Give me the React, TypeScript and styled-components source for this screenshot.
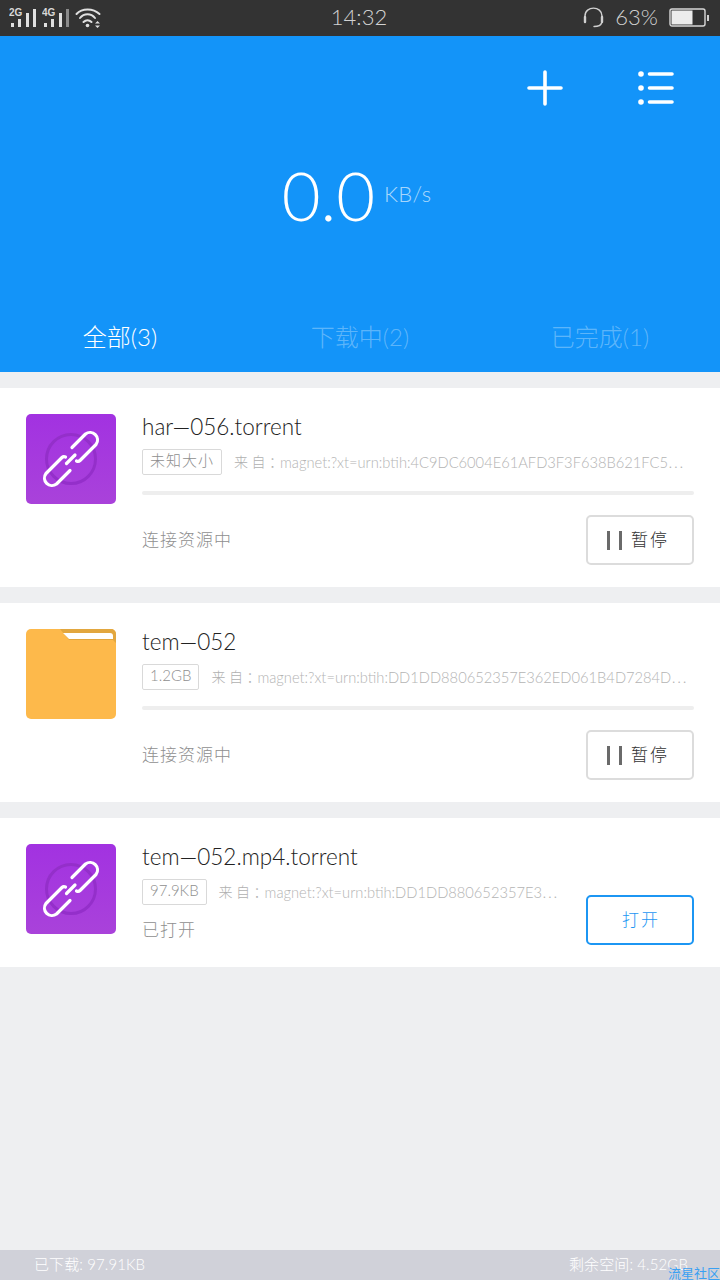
import styled, { createGlobalStyle } from "styled-components"

const GlobalStyle = createGlobalStyle`
    * { box-sizing: border-box; }
    html, body { margin: 0; padding: 0; }
    body {
        background: #eeeff1;
        font-family: Lato, "Noto Sans CJK SC", sans-serif;
    }
`

const Page = styled.div`
    position: relative;
    width: 720px;
    height: 1280px;
    display: flex;
    flex-direction: column;
    overflow: hidden;
    background: #eeeff1;
`

const StatusBar = styled.div`
    height: 36px;
    background: #333333;
    color: #d2d2d2;
    display: grid;
    grid-template-columns: 1fr auto 1fr;
    align-items: center;
    padding: 0 11px 4px 9px;
`

const StatusLeft = styled.div`
    display: flex;
    align-items: center;
`

const StatusRight = styled.div`
    display: flex;
    align-items: center;
    justify-content: flex-end;
    gap: 11px;
`

const StatusClock = styled.span`
    font-size: 22px;
    font-weight: 300;
`

const StatusPercent = styled.span`
    font-size: 22px;
    font-weight: 300;
`

const SmallTag = styled.text`
    font-family: "Liberation Sans", sans-serif;
    font-size: 10px;
    font-weight: 700;
    fill: #d8d8d8;
`

const Header = styled.header`
    height: 336px;
    background: #1394f9;
    display: flex;
    flex-direction: column;
    color: #fff;
`

const HeaderActions = styled.div`
    display: flex;
    justify-content: flex-end;
    gap: 75px;
    padding: 34px 46px 0 0;
`

const Speed = styled.div`
    display: flex;
    justify-content: center;
    align-items: flex-start;
    gap: 9px;
    margin-top: 45px;
    padding-right: 7px;
`

const SpeedValue = styled.span`
    font-size: 67px;
    font-weight: 300;
    line-height: 88px;
`

const SpeedUnit = styled.span`
    font-size: 22px;
    font-weight: 300;
    line-height: 26px;
    margin-top: 30px;
    letter-spacing: 0.3px;
    color: rgba(255, 255, 255, 0.65);
`

const Tabs = styled.nav`
    margin-top: auto;
    height: 70px;
    padding-bottom: 4px;
    display: grid;
    grid-template-columns: repeat(3, 1fr);
    align-items: center;
`

const Tab = styled.span<{ $active?: boolean }>`
    text-align: center;
    font-size: 24px;
    font-weight: 300;
    color: ${(p) => (p.$active ? "#ffffff" : "rgba(255, 255, 255, 0.32)")};
`

const List = styled.main`
    flex: 1;
    display: flex;
    flex-direction: column;
    gap: 16px;
    padding-top: 16px;
`

const Card = styled.article`
    display: flex;
    gap: 26px;
    padding: 26px 26px 22px;
    background: #fff;
`

const Thumb = styled.div`
    flex: none;
    width: 90px;
    height: 90px;
`

const Body = styled.div<{ $row?: boolean }>`
    flex: 1;
    min-width: 0;
    display: flex;
    flex-direction: ${(p) => (p.$row ? "row" : "column")};
    gap: ${(p) => (p.$row ? "26px" : "0")};
`

const Info = styled.div`
    flex: 1;
    min-width: 0;
`

const Title = styled.div`
    height: 26px;
    line-height: 25px;
    font-size: 22.5px;
    font-weight: 300;
    color: #222222;
`

const MetaRow = styled.div`
    display: flex;
    align-items: center;
    gap: 12px;
    height: 26px;
    margin-top: 9px;
    overflow: hidden;
    white-space: nowrap;
`

const SizeTag = styled.span<{ $spaced?: boolean }>`
    flex: none;
    height: 26px;
    line-height: 21px;
    padding: 0 7px;
    border: 1px solid #d9d9d9;
    border-radius: 2px;
    font-size: 15px;
    font-weight: 300;
    letter-spacing: ${(p) => (p.$spaced ? "1px" : "0")};
    color: #8f8f8f;
`

const Source = styled.span`
    flex: none;
    margin: 0 -11.5px 3px 0;
    font-size: 14px;
    font-weight: 300;
    font-feature-settings: "halt";
    letter-spacing: 3.5px;
    color: #b0b0b0;
`

const Url = styled.span`
    margin-bottom: 2px;
    font-size: 14.7px;
    font-weight: 300;
    color: #b4b4b4;
`

const Progress = styled.div`
    height: 4px;
    margin-top: 16px;
    border-radius: 2px;
    background: #eeeeee;
`

const ActionRow = styled.div`
    display: flex;
    align-items: center;
    justify-content: space-between;
    margin-top: 20px;
`

const Status = styled.span`
    margin-bottom: 4px;
    font-size: 17px;
    font-weight: 300;
    letter-spacing: 1px;
    color: #8f8f8f;
`

const OpenedStatus = styled(Status)`
    display: block;
    margin-top: 13px;
    margin-bottom: 0;
    padding-bottom: 3px;
    line-height: 24px;
`

const Button = styled.button<{ $primary?: boolean }>`
    flex: none;
    align-self: flex-end;
    width: 108px;
    height: 50px;
    display: flex;
    align-items: center;
    justify-content: center;
    gap: 9px;
    padding: 0;
    background: #fff;
    border: 2px solid ${(p) => (p.$primary ? "#1c96f3" : "#dcdcdc")};
    border-radius: 5px;
    font-family: inherit;
    font-size: 17px;
    font-weight: 300;
    letter-spacing: 2px;
    color: ${(p) => (p.$primary ? "#1c96f3" : "#333333")};
`

const ButtonLabel = styled.span`
    margin: 0 -2px 3px 0;
`

const PauseMark = styled.span`
    width: 15px;
    height: 19px;
    margin-left: -6px;
    border-left: 3px solid #6a6a6a;
    border-right: 3px solid #6a6a6a;
`

const Footer = styled.footer`
    height: 30px;
    background: #d0d1d9;
    display: flex;
    align-items: center;
    justify-content: space-between;
    padding: 0 32px 3px 34px;
    font-size: 15px;
    font-weight: 300;
    letter-spacing: 0.1px;
    color: #fff;
`

const Watermark = styled.span`
    position: absolute;
    right: 0;
    bottom: 0;
    font-size: 13px;
    line-height: 14px;
    color: #3aa0f2;
`

const SignalIcon = (props: { label: string; dim?: boolean }) => (
    <svg width="33" height="24" viewBox="0 0 33 24">
        <SmallTag x="0" y="12">{props.label}</SmallTag>
        <rect x="2" y="19" width="3" height="4" fill="#e0e0e0" />
        <rect x="9" y="15" width="3" height="8" fill="#e0e0e0" />
        <rect x="17" y="9" width="3" height="14" fill="#e0e0e0" />
        <rect x="24" y="5" width="3" height="18" fill={props.dim ? "#8a8a8a" : "#e0e0e0"} />
    </svg>
)

const WifiIcon = () => (
    <svg width="26" height="26" viewBox="0 0 26 26" fill="none" stroke="#e0e0e0" strokeWidth="2" strokeLinecap="round">
        <path d="M1.500 11 C7 5 18 5 24.500 11" />
        <path d="M5 15 C9 10 16 10 20 15" />
        <path d="M8.500 19 C11 16.500 14 16.500 16.500 19" />
        <circle cx="12.500" cy="22.500" r="1.800" fill="#e0e0e0" stroke="none" />
        <path d="M20 20.500 L22.500 18 L25 20.500 Z M20 22.500 L22.500 25 L25 22.500 Z" fill="#e0e0e0" stroke="none" />
    </svg>
)

const HeadsetIcon = () => (
    <svg width="22" height="24" viewBox="0 0 22 24" fill="none" stroke="#d0d0d0" strokeLinecap="round">
        <path d="M3 15 V12 C3 1.500 20 1.500 20 12 V15" strokeWidth="1.400" />
        <path d="M3 13 V18" strokeWidth="2.400" />
        <path d="M20 13 V18" strokeWidth="2.400" />
        <path d="M19.500 19 C19 21.500 17 22.500 12 22.500" strokeWidth="1.400" />
    </svg>
)

const BatteryIcon = () => (
    <svg width="40" height="24" viewBox="0 0 40 24">
        <rect x="1" y="5" width="35" height="17" rx="2" fill="none" stroke="#d8d8d8" strokeWidth="1.400" />
        <rect x="2.500" y="6.500" width="21" height="14" fill="#ececec" />
        <rect x="38" y="11" width="2" height="6" fill="#d0d0d0" />
    </svg>
)

const PlusIcon = () => (
    <svg width="36" height="36" viewBox="0 0 36 36" stroke="#fff" strokeWidth="3.600" strokeLinecap="round">
        <path d="M18 2 V34 M2 18 H34" />
    </svg>
)

const MenuIcon = () => (
    <svg width="36" height="36" viewBox="0 0 36 36" stroke="#fff" strokeWidth="3.600" strokeLinecap="round" fill="#fff">
        <path d="M11.500 4 H34 M11.500 18 H34 M11.500 32 H34" />
        <circle cx="3" cy="4" r="2.800" stroke="none" />
        <circle cx="3" cy="18" r="2.800" stroke="none" />
        <circle cx="3" cy="32" r="2.800" stroke="none" />
    </svg>
)

const LinkThumb = (props: { id: string }) => (
    <Thumb>
        <svg width="90" height="90" viewBox="0 0 90 90">
            <defs>
                <linearGradient id={props.id} x1="0" y1="0" x2="0" y2="1">
                    <stop offset="0" stopColor="#a232e1" />
                    <stop offset="1" stopColor="#a942da" />
                </linearGradient>
            </defs>
            <rect width="90" height="90" rx="5" fill={`url(#${props.id})`} />
            <circle cx="45" cy="45" r="24.500" fill="none" stroke="#942fca" strokeWidth="3" />
            <g fill="none" stroke="#fff" strokeWidth="3.200" strokeLinecap="round" strokeLinejoin="round">
                <path d="M46 33.500 L59.500 20 A7.500 7.500 0 0 1 70 30.500 L54 46.500 Q52.500 48 50.500 47" />
                <path d="M44 56.500 L30.500 70 A7.500 7.500 0 0 1 20 59.500 L36 43.500 Q37.500 42 39.500 43" />
                <path d="M40.500 49.500 L49 41" />
            </g>
        </svg>
    </Thumb>
)

const FolderThumb = () => (
    <Thumb>
        <svg width="90" height="90" viewBox="0 0 90 90">
            <path d="M5 0 H85 A5 5 0 0 1 90 5 V85 A5 5 0 0 1 85 90 H5 A5 5 0 0 1 0 85 V5 A5 5 0 0 1 5 0 Z" fill="#fdb94b" />
            <path d="M34 0 H85 A5 5 0 0 1 90 5 V14 L87 11 H43 Z" fill="#e2a73f" />
            <path d="M37 4 H84 A3 3 0 0 1 87 7 V10 H43 Z" fill="#fff" />
        </svg>
    </Thumb>
)

const Meta = (props: { size: string; url: string; spaced?: boolean }) => (
    <MetaRow>
        <SizeTag $spaced={props.spaced}>{props.size}</SizeTag>
        <Source>来自：</Source>
        <Url>{props.url}</Url>
    </MetaRow>
)

const PauseButton = () => (
    <Button><PauseMark /><ButtonLabel>暂停</ButtonLabel></Button>
)

const App = () => {
    return (
        <Page>
            <GlobalStyle />
            <StatusBar>
                <StatusLeft>
                    <SignalIcon label="2G" />
                    <SignalIcon label="4G" dim />
                    <WifiIcon />
                </StatusLeft>
                <StatusClock>14:32</StatusClock>
                <StatusRight>
                    <HeadsetIcon />
                    <StatusPercent>63%</StatusPercent>
                    <BatteryIcon />
                </StatusRight>
            </StatusBar>
            <Header>
                <HeaderActions>
                    <PlusIcon />
                    <MenuIcon />
                </HeaderActions>
                <Speed>
                    <SpeedValue>0.0</SpeedValue>
                    <SpeedUnit>KB/s</SpeedUnit>
                </Speed>
                <Tabs>
                    <Tab $active>全部(3)</Tab>
                    <Tab>下载中(2)</Tab>
                    <Tab>已完成(1)</Tab>
                </Tabs>
            </Header>
            <List>
                <Card>
                    <LinkThumb id="link-a" />
                    <Body>
                        <Title>har—056.torrent</Title>
                        <Meta spaced size="未知大小" url="magnet:?xt=urn:btih:4C9DC6004E61AFD3F3F638B621FC5⋯" />
                        <Progress />
                        <ActionRow>
                            <Status>连接资源中</Status>
                            <PauseButton />
                        </ActionRow>
                    </Body>
                </Card>
                <Card>
                    <FolderThumb />
                    <Body>
                        <Title>tem—052</Title>
                        <Meta size="1.2GB" url="magnet:?xt=urn:btih:DD1DD880652357E362ED061B4D7284D⋯" />
                        <Progress />
                        <ActionRow>
                            <Status>连接资源中</Status>
                            <PauseButton />
                        </ActionRow>
                    </Body>
                </Card>
                <Card>
                    <LinkThumb id="link-b" />
                    <Body $row>
                        <Info>
                            <Title>tem—052.mp4.torrent</Title>
                            <Meta size="97.9KB" url="magnet:?xt=urn:btih:DD1DD880652357E3⋯" />
                            <OpenedStatus>已打开</OpenedStatus>
                        </Info>
                        <Button $primary><ButtonLabel>打开</ButtonLabel></Button>
                    </Body>
                </Card>
            </List>
            <Footer>
                <span>已下载: 97.91KB</span>
                <span>剩余空间: 4.52GB</span>
            </Footer>
            <Watermark>流星社区</Watermark>
        </Page>
    )
}

export default App
